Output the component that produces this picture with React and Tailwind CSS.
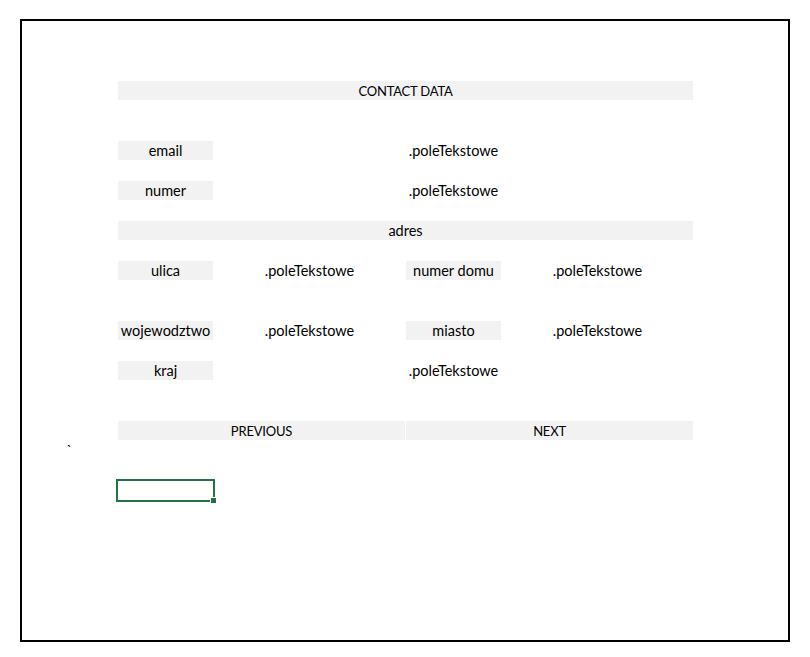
export default function App() {
  const label = "flex items-center justify-center pt-[2px] bg-[#f2f2f2] whitespace-nowrap overflow-hidden";
  const field = "flex items-center justify-center pt-[2px] whitespace-nowrap";
  const caps = "text-[13px] tracking-[-0.2px]";

  return (
    <div className="min-h-screen bg-white pl-[20px] pt-[19px] font-['Lato','Liberation_Sans',sans-serif] text-[14.5px] text-black">
      <div className="w-[770px] h-[623px] border-2 border-black">
        <div className="grid grid-cols-[repeat(7,95px)] grid-rows-[repeat(24,19px)] gap-px leading-none">
          <div className={`${label} ${caps} col-start-2 col-span-6 row-start-4`}>CONTACT DATA</div>

          <div className={`${label} col-start-2 row-start-7`}>email</div>
          <div className={`${field} col-start-3 col-span-5 row-start-7`}>.poleTekstowe</div>

          <div className={`${label} col-start-2 row-start-9`}>numer</div>
          <div className={`${field} col-start-3 col-span-5 row-start-9`}>.poleTekstowe</div>

          <div className={`${label} col-start-2 col-span-6 row-start-11`}>adres</div>

          <div className={`${label} col-start-2 row-start-13`}>ulica</div>
          <div className={`${field} col-start-3 col-span-2 row-start-13`}>.poleTekstowe</div>
          <div className={`${label} col-start-5 row-start-13`}>numer domu</div>
          <div className={`${field} col-start-6 col-span-2 row-start-13`}>.poleTekstowe</div>

          <div className={`${label} col-start-2 row-start-16`}>wojewodztwo</div>
          <div className={`${field} col-start-3 col-span-2 row-start-16`}>.poleTekstowe</div>
          <div className={`${label} col-start-5 row-start-16`}>miasto</div>
          <div className={`${field} col-start-6 col-span-2 row-start-16`}>.poleTekstowe</div>

          <div className={`${label} col-start-2 row-start-18`}>kraj</div>
          <div className={`${field} col-start-3 col-span-5 row-start-18`}>.poleTekstowe</div>

          <div className={`${label} ${caps} col-start-2 col-span-3 row-start-21`}>PREVIOUS</div>
          <div className={`${label} ${caps} col-start-5 col-span-3 row-start-21`}>NEXT</div>

          <div className={`${field} col-start-1 row-start-22`}>`</div>

          {/* selected cell */}
          <div className="relative col-start-2 row-start-24">
            <div className="absolute -inset-[2px] border-2 border-[#217346]" />
            <div className="absolute -right-[3px] -bottom-[3px] w-[5px] h-[5px] bg-[#217346] outline outline-1 outline-white" />
          </div>
        </div>
      </div>
    </div>
  );
}
